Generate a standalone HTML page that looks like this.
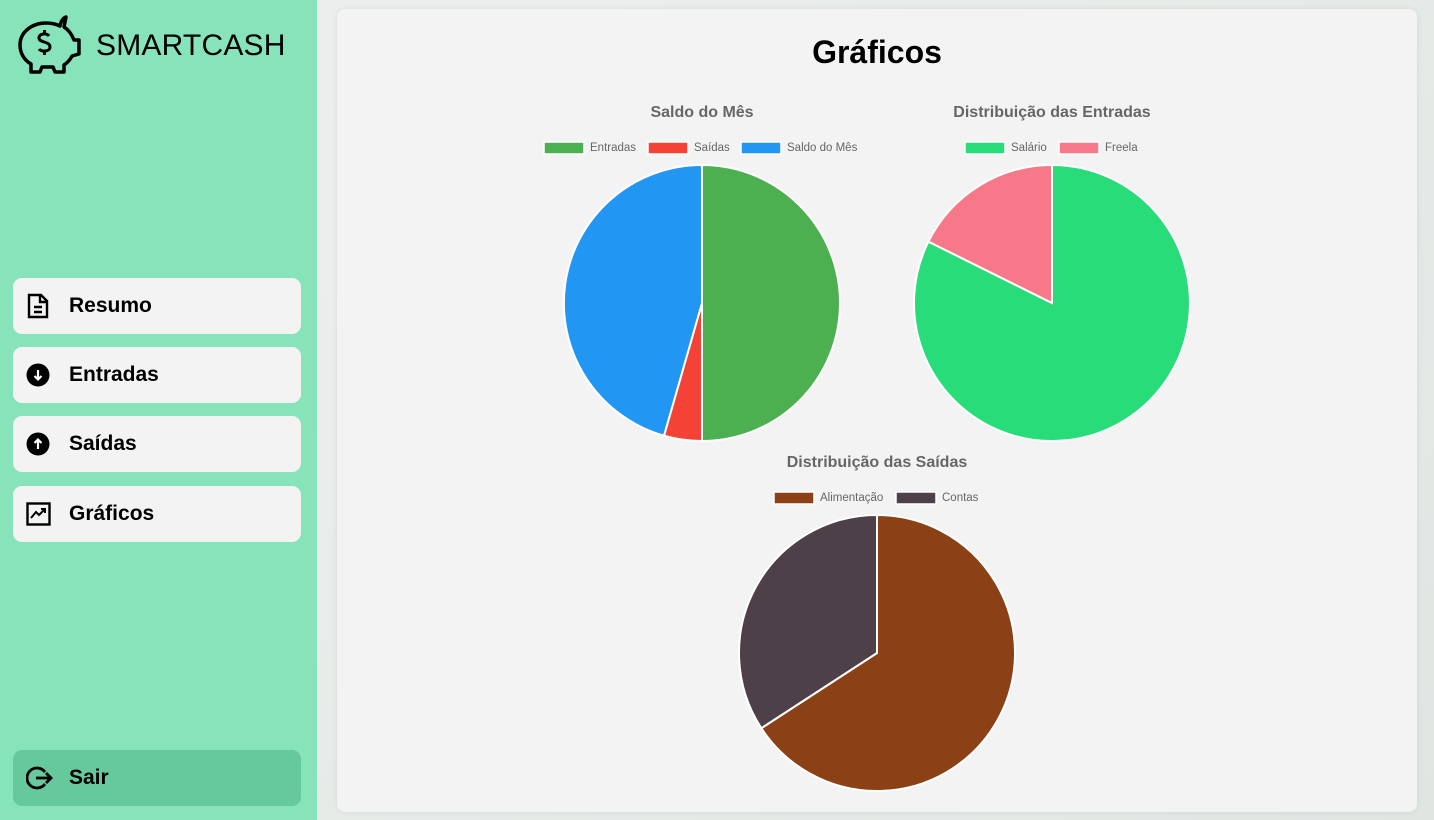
<!DOCTYPE html>
<html><head><meta charset="utf-8"><style>
*{margin:0;padding:0;box-sizing:border-box}
body{width:1434px;height:820px;overflow:hidden;background:linear-gradient(135deg,#eef0ef,#dfe6e2);font-family:"Liberation Sans",sans-serif;position:relative}
.side{position:absolute;left:0;top:0;width:317px;height:820px;background:#86e3ba}
.logo{position:absolute;left:18px;top:14px;display:flex;align-items:center}
.logo span{font-size:30px;color:#000;margin-left:14px;letter-spacing:0.2px;position:relative;top:2px}
.btn{position:absolute;left:13px;width:288px;height:56px;background:#f3f3f3;border-radius:9px;display:flex;align-items:center;font-weight:bold;font-size:21px;color:#000}
.btn svg{position:absolute;left:13px}
.btn b{position:absolute;left:56px;top:16px}
.sair{background:#66c99d}
.card{position:absolute;left:337px;top:9px;width:1080px;height:803px;background:#f3f3f3;border-radius:8px;box-shadow:0 0 6px rgba(0,0,0,0.08)}
h1{position:absolute;left:0;width:1080px;top:25px;text-align:center;font-size:32px;font-weight:bold;color:#000}
</style></head><body>
<div class="side">
<div class="logo">
<svg width="64" height="60" viewBox="0 0 64 60" fill="none" stroke="#000" stroke-width="3.5" stroke-linejoin="round">
<path d="M48 3 L46 13 C51 16 54 21 56 26 L61 26 L61 40 L54 42 C52 46 49 49 46 51 L46 58 L37 58 L35 53 L24 53 L22 58 L13 58 L13 50 C6 46 2 39 2 31 C2 18 14 9 28 9 C33 9 38 10 42 12 C43 7 45 4 48 3 Z"/>
<path d="M31 22 C29 19 21 19 21 24 C21 29 32 27 32 33 C32 38 23 38 21 35 M26.5 16 V20 M26.5 37 V41" stroke-width="3"/>
</svg>
<span>SMARTCASH</span></div>
<div class="btn" style="top:278px"><svg width="24" height="26" viewBox="0 0 24 26" fill="none" stroke="#000" stroke-width="2.4"><path d="M3 2 H15 L21 8 V24 H3 Z M14 2 V9 H21 M8 14 H16 M8 19 H16"/></svg><b>Resumo</b></div>
<div class="btn" style="top:347px"><svg width="26" height="26" viewBox="0 0 26 26"><circle cx="12" cy="13" r="11.5" fill="#000"/><path d="M12 8 V17 M8.5 14 L12 17.5 L15.5 14" stroke="#fff" stroke-width="2.2" fill="none"/></svg><b>Entradas</b></div>
<div class="btn" style="top:416px"><svg width="26" height="26" viewBox="0 0 26 26"><circle cx="12" cy="13" r="11.5" fill="#000"/><path d="M12 18 V9 M8.5 12 L12 8.5 L15.5 12" stroke="#fff" stroke-width="2.2" fill="none"/></svg><b>Saídas</b></div>
<div class="btn" style="top:486px"><svg width="26" height="26" viewBox="0 0 26 26" fill="none" stroke="#000" stroke-width="2.4"><rect x="1.5" y="2.5" width="22" height="21"/><path d="M5 17 L10 11 L13 14 L19 8 M15 8 H19 V12" stroke-width="2"/></svg><b>Gráficos</b></div>
<div class="btn sair" style="top:750px"><svg width="28" height="26" viewBox="0 0 28 26" fill="none" stroke="#000" stroke-width="2.8"><path d="M19 7 A10 10 0 1 0 19 19 M10 13 H25 M20 8 L25 13 L20 18"/></svg><b>Sair</b></div>
</div>
<div class="card"><h1>Gráficos</h1></div>
<svg style="position:absolute;left:0;top:0" width="1434" height="820" font-family="Liberation Sans, sans-serif">
<g font-weight="bold" font-size="16" fill="#666" text-anchor="middle">
<text x="702" y="117">Saldo do Mês</text>
<text x="1052" y="117">Distribuição das Entradas</text>
<text x="877" y="467">Distribuição das Saídas</text>
</g>
<g font-size="11.5" fill="#666" stroke="#fff" stroke-width="1.5">
<rect x="544" y="142" width="40" height="12" fill="#4CAF50"/><text x="590" y="151" stroke="none">Entradas</text>
<rect x="648" y="142" width="40" height="12" fill="#F44336"/><text x="694" y="151" stroke="none">Saídas</text>
<rect x="741" y="142" width="40" height="12" fill="#2196F3"/><text x="787" y="151" stroke="none">Saldo do Mês</text>
<rect x="965" y="142" width="40" height="12" fill="#28DC7A"/><text x="1011" y="151" stroke="none">Salário</text>
<rect x="1059" y="142" width="40" height="12" fill="#F77888"/><text x="1105" y="151" stroke="none">Freela</text>
<rect x="774" y="492" width="40" height="12" fill="#8B4115"/><text x="820" y="501" stroke="none">Alimentação</text>
<rect x="896" y="492" width="40" height="12" fill="#4E4048"/><text x="942" y="501" stroke="none">Contas</text>
</g>
<g stroke="#fff" stroke-width="2">
<path d="M702,303 L702,165 A138,138 0 0 1 702,441 Z" fill="#4CAF50"/>
<path d="M702,303 L702,441 A138,138 0 0 1 664,435.7 Z" fill="#F44336"/>
<path d="M702,303 L664,435.7 A138,138 0 0 1 702,165 Z" fill="#2196F3"/>
<path d="M1052,303 L1052,165 A138,138 0 1 1 928.4,241.6 Z" fill="#28DC7A"/>
<path d="M1052,303 L928.4,241.6 A138,138 0 0 1 1052,165 Z" fill="#F77888"/>
<path d="M877,653 L877,515 A138,138 0 1 1 761.3,728.2 Z" fill="#8B4115"/>
<path d="M877,653 L761.3,728.2 A138,138 0 0 1 877,515 Z" fill="#4E4048"/>
</g>
</svg>
</body></html>
